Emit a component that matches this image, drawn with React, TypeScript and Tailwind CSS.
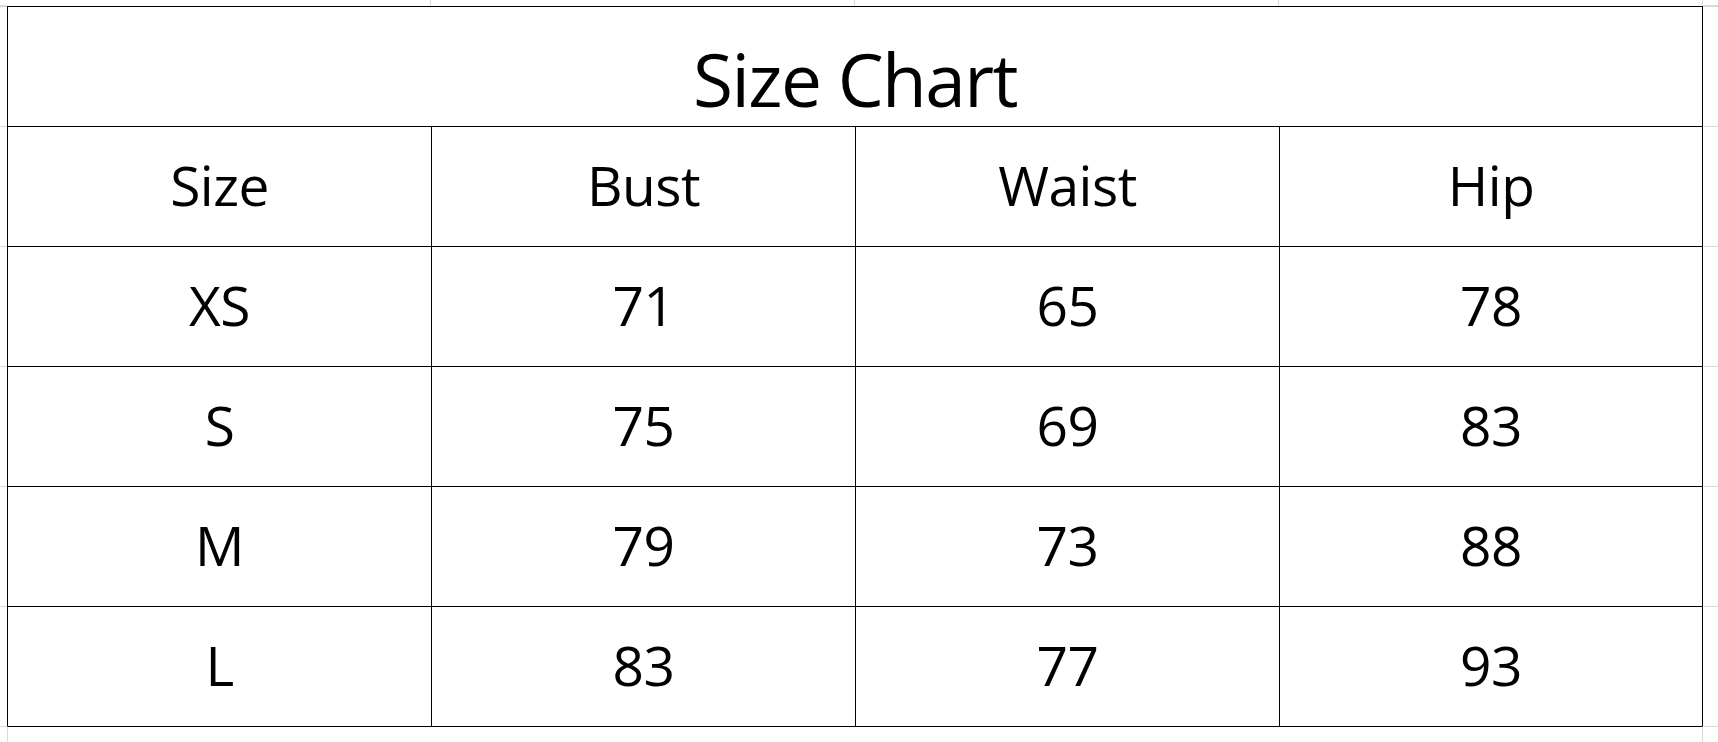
const columns = ["Size", "Bust", "Waist", "Hip"];

const rows = [
  ["XS", "71", "65", "78"],
  ["S", "75", "69", "83"],
  ["M", "79", "73", "88"],
  ["L", "83", "77", "93"],
];

const Cell = ({ children, last }: { children: React.ReactNode; last?: boolean }) => (
  <div
    className={`flex items-center justify-center border-l border-t border-black text-[55px] leading-none tracking-[-0.5px] text-black ${
      last ? "border-r" : ""
    }`}
  >
    <span className="pb-[4px]">{children}</span>
  </div>
);

export default function App() {
  return (
    <div
      className="grid h-[742px] w-[1718px] grid-cols-[7px_repeat(4,424px)_1fr] grid-rows-[6px_repeat(6,120px)_1fr] bg-white"
      style={{ fontFamily: '"Open Sans", "Noto Sans", sans-serif' }}
    >
      {/* top margin gridlines */}
      <div className="border-b border-[#d9d9d9]" />
      <div className="border-r border-[#d9d9d9]" />
      <div className="border-r border-[#d9d9d9]" />
      <div className="border-r border-[#d9d9d9]" />
      <div className="border-r border-[#d9d9d9]" />
      <div className="border-b border-[#d9d9d9]" />

      {/* title row */}
      <div className="border-t border-[#d9d9d9]" />
      <div className="col-span-4 flex items-end justify-center border-l border-r border-t border-black pb-[11px]">
        <span className="text-[73px] leading-none tracking-[-1.6px] text-black">Size Chart</span>
      </div>
      <div className="border-t border-[#d9d9d9]" />

      {/* header row */}
      <div className="border-t border-[#d9d9d9]" />
      {columns.map((c, i) => (
        <Cell key={c} last={i === 3}>
          {c}
        </Cell>
      ))}
      <div className="border-t border-[#d9d9d9]" />

      {rows.map((r) => (
        <>
          <div key={r[0] + "l"} className="border-t border-[#d9d9d9]" />
          {r.map((v, i) => (
            <Cell key={r[0] + i} last={i === 3}>
              {v}
            </Cell>
          ))}
          <div key={r[0] + "r"} className="border-t border-[#d9d9d9]" />
        </>
      ))}

      {/* bottom margin gridlines */}
      <div className="border-t border-[#d9d9d9]" />
      <div className="border-t border-l border-black [border-left-color:#d9d9d9]" />
      <div className="border-t border-black" />
      <div className="border-t border-black" />
      <div className="border-t border-r border-black [border-right-color:#d9d9d9]" />
      <div className="border-t border-[#d9d9d9]" />
    </div>
  );
}
